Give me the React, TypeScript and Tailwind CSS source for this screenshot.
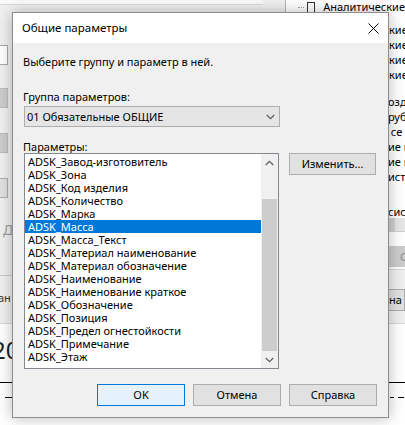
import React from 'react';

const params = [
    'ADSK_Завод-изготовитель',
    'ADSK_Зона',
    'ADSK_Код изделия',
    'ADSK_Количество',
    'ADSK_Марка',
    'ADSK_Масса',
    'ADSK_Масса_Текст',
    'ADSK_Материал наименование',
    'ADSK_Материал обозначение',
    'ADSK_Наименование',
    'ADSK_Наименование краткое',
    'ADSK_Обозначение',
    'ADSK_Позиция',
    'ADSK_Предел огнестойкости',
    'ADSK_Примечание',
    'ADSK_Этаж',
];

const selected = 'ADSK_Масса';

function Chevron({ up, className }: { up?: boolean; className?: string }) {
    return (
        <svg width="9" height="6" viewBox="0 0 9 6" className={className}>
            <path
                d={up ? 'M0.8 5 L4.5 1.3 L8.2 5' : 'M0.8 1 L4.5 4.7 L8.2 1'}
                fill="none"
                stroke="#606060"
                strokeWidth="1.3"
            />
        </svg>
    );
}

function Background() {
    return (
        <div className="flex h-full flex-col">
            <div className="flex h-[324px] shrink-0">
                {/* left pane */}
                <div className="flex w-[286px] shrink-0 flex-col border-r border-[#b4b4b4] bg-[#f0f0f0]">
                    <div className="h-[5px] w-[263px] border-b border-[#dadada] bg-[#fafafa]" />
                    <div className="mt-[40px] h-[20px] w-[8px] border border-l-0 border-[#a8a8a8] bg-white" />
                    <div className="mt-[23px] h-[20px] w-[8px] border border-l-0 border-[#bcbcbc] bg-[#cccccc]" />
                    <div className="mt-[25px] h-[20px] w-[8px] border border-l-0 border-[#bcbcbc] bg-[#cccccc]" />
                    <div className="mt-[25px] h-[20px] w-[8px] border border-l-0 border-[#adadad] bg-[#e1e1e1]" />
                    <div className="mt-[24px] h-[16px] pl-[3px] text-[14px] leading-[16px] text-[#a0a0a0]">
                        Д
                    </div>
                    <div className="mt-[37px] h-px bg-[#c8c8c8]" />
                    <div className="mt-[14px] h-[16px] leading-[16px] text-[#333]">
                        <span className="ml-[-2px]">ан</span>
                    </div>
                    <div className="flex-1 border-b border-[#d8d8d8]" />
                </div>

                {/* right pane */}
                <div className="flex min-w-0 flex-1 flex-col bg-white">
                    <div className="flex h-[14px] items-center">
                        <div className="ml-[12px] w-[10px] border-t border-dotted border-[#a0a0a0]" />
                        <div className="ml-[3px] h-[11px] w-[11px] border border-[#333] bg-white" />
                        <span className="ml-[8px] whitespace-nowrap leading-[14px]">
                            Аналитические
                        </span>
                    </div>
                    <div className="mt-[8px] flex flex-col pl-[103px] leading-[15px]">
                        {['кие', 'кие', 'кие', 'кие'].map((t, i) => (
                            <div key={i} className="h-[15px] whitespace-nowrap">
                                {t}
                            </div>
                        ))}
                    </div>
                    <div className="mt-[12px] flex flex-col pl-[102px] leading-[15px]">
                        {['озд', 'рубо', '\u00a0се', 'ие п', 'ие п', 'исто'].map(
                            (t, i) => (
                                <div key={i} className="h-[15px] whitespace-nowrap">
                                    {t}
                                </div>
                            ),
                        )}
                    </div>
                    <div className="mt-[21px] h-[13px] whitespace-nowrap pl-[102px] leading-[13px]">
                        сис
                    </div>
                    <div className="flex h-[14px] border-b border-[#d0d0d0]">
                        <div className="w-[109px] bg-[#cfcfcf]" />
                        <div className="flex-1 bg-[#e6e6e6]" />
                    </div>
                    <div className="mt-[14px] h-[21px] bg-[#cccccc] pl-[114px] leading-[21px] text-[#8a8a8a]">
                        С
                    </div>
                    <div className="mt-[2px] flex flex-1 flex-col border-t border-b border-[#d8d8d8] bg-[#f0f0f0]">
                        <div className="mt-[19px] h-[22px] border border-[#adadad] bg-[#e1e1e1] pl-[102px] leading-[20px]">
                            на
                        </div>
                    </div>
                </div>
            </div>

            {/* lower drawing area */}
            <div className="flex flex-1 flex-col bg-white">
                <div className="mt-[11px] h-[30px] whitespace-nowrap text-[24px] leading-[30px] text-[#222]">
                    <span className="ml-[-8px]">20</span>
                </div>
                <div className="mt-[17px] h-px bg-black" />
                <div className="mt-[14px] flex h-px">
                    <div className="ml-[5px] w-[10px] bg-black" />
                    <div className="ml-[375px] w-[4px] bg-black" />
                    <div className="ml-[4px] w-[6px] bg-black" />
                </div>
            </div>
        </div>
    );
}

function WinButton({
    children,
    primary,
    className,
}: {
    children: React.ReactNode;
    primary?: boolean;
    className?: string;
}) {
    return (
        <div
            className={
                'flex h-[22px] items-center justify-center border ' +
                (primary
                    ? 'border-[#0078d7] bg-[#e5f1fb] '
                    : 'border-[#adadad] bg-[#e1e1e1] ') +
                (className ?? '')
            }
        >
            {children}
        </div>
    );
}

export default function App() {
    return (
        <div className="relative h-[425px] w-[405px] overflow-hidden bg-white font-['Noto_Sans',sans-serif] text-[11px] text-black">
            <Background />

            <div className="absolute left-[12px] top-[12px] flex h-[406px] w-[377px] flex-col border border-[#8c8c8c] bg-[#f0f0f0] shadow-[0_0_14px_rgba(0,0,0,0.28)]">
                <div className="flex h-[30px] shrink-0 items-center justify-between bg-white pl-[9px] pr-[9px]">
                    <span className="text-[11.5px] leading-[16px]">Общие параметры</span>
                    <svg width="11" height="11" viewBox="0 0 11 11">
                        <path
                            d="M0.5 0.5 L10.5 10.5 M10.5 0.5 L0.5 10.5"
                            stroke="#000"
                            strokeWidth="1"
                        />
                    </svg>
                </div>

                <div className="flex flex-col pl-[10px] pr-[11px]">
                    <div className="mt-[11px] h-[16px] leading-[16px]">
                        Выберите группу и параметр в ней.
                    </div>
                    <div className="mt-[19px] h-[16px] leading-[16px]">
                        Группа параметров:
                    </div>
                    <div className="ml-px mt-px flex h-[21px] w-[256px] items-center justify-between border border-[#adadad] bg-[#e5e5e5] pl-[2px] pr-[4px]">
                        <span className="leading-[16px]">01 Обязательные ОБЩИЕ</span>
                        <Chevron />
                    </div>
                    <div className="mt-[13px] h-[13px] leading-[13px]">Параметры:</div>

                    <div className="flex">
                        <div className="ml-px flex h-[216px] w-[255px] border border-[#828790] bg-white">
                            <div className="flex flex-1 flex-col pt-px">
                                {params.map((p) => (
                                    <div
                                        key={p}
                                        className={
                                            'h-[13px] whitespace-nowrap pl-[3px] leading-[13px] ' +
                                            (p === selected
                                                ? 'bg-[#0078d7] text-white'
                                                : '')
                                        }
                                    >
                                        {p}
                                    </div>
                                ))}
                            </div>
                            <div className="flex w-[17px] flex-col bg-[#f0f0f0]">
                                <div className="flex h-[17px] items-center justify-center">
                                    <Chevron up />
                                </div>
                                <div className="mx-px mt-[28px] h-[152px] bg-[#cdcdcd]" />
                                <div className="flex h-[17px] items-center justify-center">
                                    <Chevron />
                                </div>
                            </div>
                        </div>
                        <WinButton className="ml-[10px] h-[22px] w-[87px]">Изменить...</WinButton>
                    </div>

                    <div className="mt-[15px] flex justify-end gap-[8px]">
                        <WinButton primary className="w-[88px]">
                            OK
                        </WinButton>
                        <WinButton className="w-[88px]">Отмена</WinButton>
                        <WinButton className="w-[88px]">Справка</WinButton>
                    </div>
                </div>
            </div>
        </div>
    );
}
